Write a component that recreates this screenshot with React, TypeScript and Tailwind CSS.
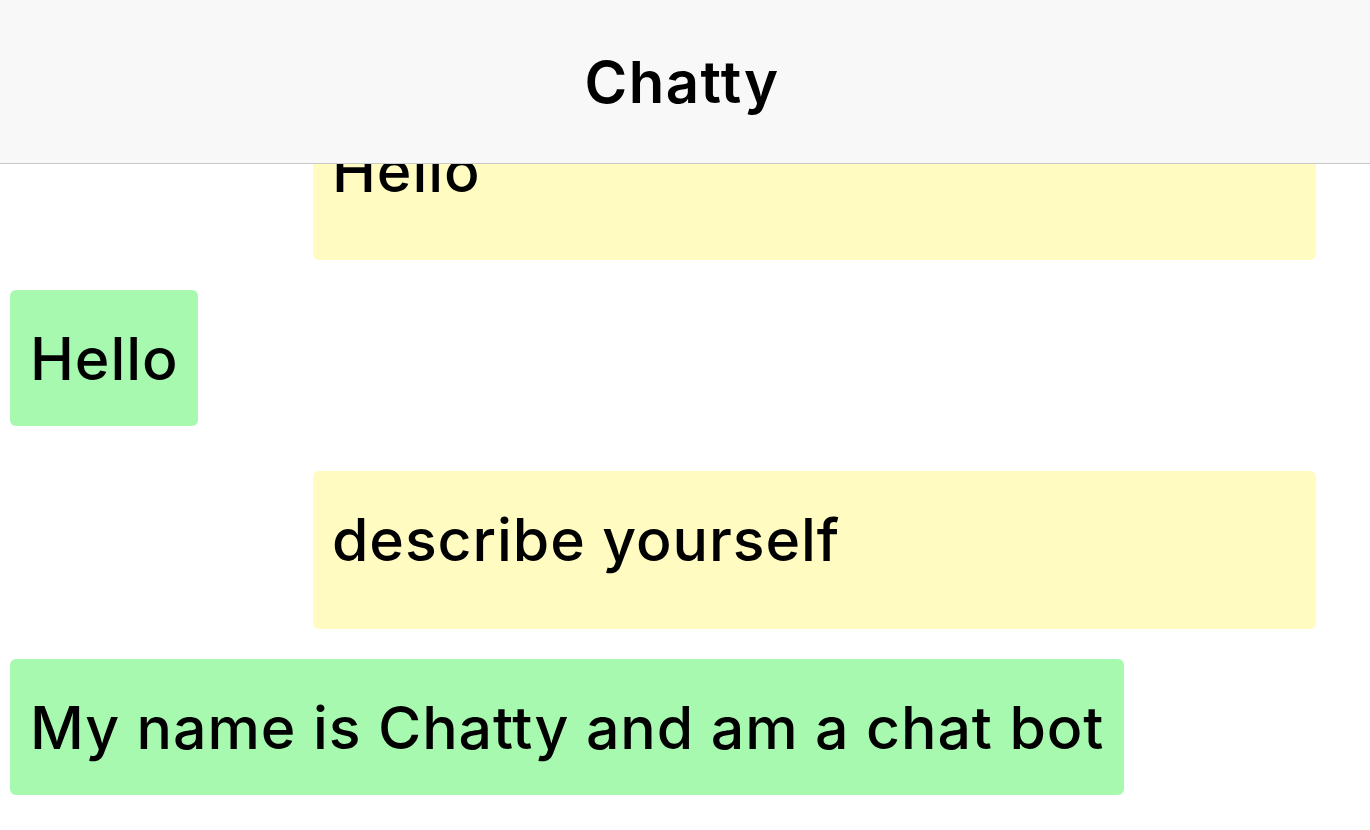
const MESSAGES: { from: 'me' | 'bot'; text: string }[] = [
  { from: 'me', text: 'Hello' },
  { from: 'bot', text: 'Hello' },
  { from: 'me', text: 'describe yourself' },
  { from: 'bot', text: 'My name is Chatty and am a chat bot' },
]

export default function App() {
  return (
    <div className="flex h-[830px] w-[1370px] flex-col overflow-hidden bg-white text-black [font-family:Inter,'Liberation_Sans',sans-serif]">
      <header className="z-10 flex h-[164px] shrink-0 items-center justify-center border-b border-[#c8c8c8] bg-[#f8f8f8]">
        <h1 className="-ml-[6px] text-[58px] font-semibold leading-none tracking-[1.5px]">Chatty</h1>
      </header>

      {/* Scrolled list: the first bubble sits partly under the header */}
      <div className="flex flex-1 flex-col overflow-hidden">
        <div className="-mt-[62px] flex flex-col">
          {MESSAGES.map((m, i) =>
            m.from === 'me' ? (
              <div
                key={i}
                className="mb-[30px] ml-[313px] mr-[54px] h-[158px] rounded-md bg-[#fffbc1] px-[19px] pt-[39px] text-[59px] font-medium leading-[60px] tracking-[0.9px]"
              >
                {m.text}
              </div>
            ) : (
              <div key={i} className="mb-[45px] flex">
                <div className="ml-[10px] h-[136px] rounded-md bg-[#a8f9b0] px-[20px] pt-[39px] text-[59px] font-medium leading-[60px] tracking-[0.9px]">
                  {m.text}
                </div>
              </div>
            ),
          )}
        </div>
      </div>
    </div>
  )
}
